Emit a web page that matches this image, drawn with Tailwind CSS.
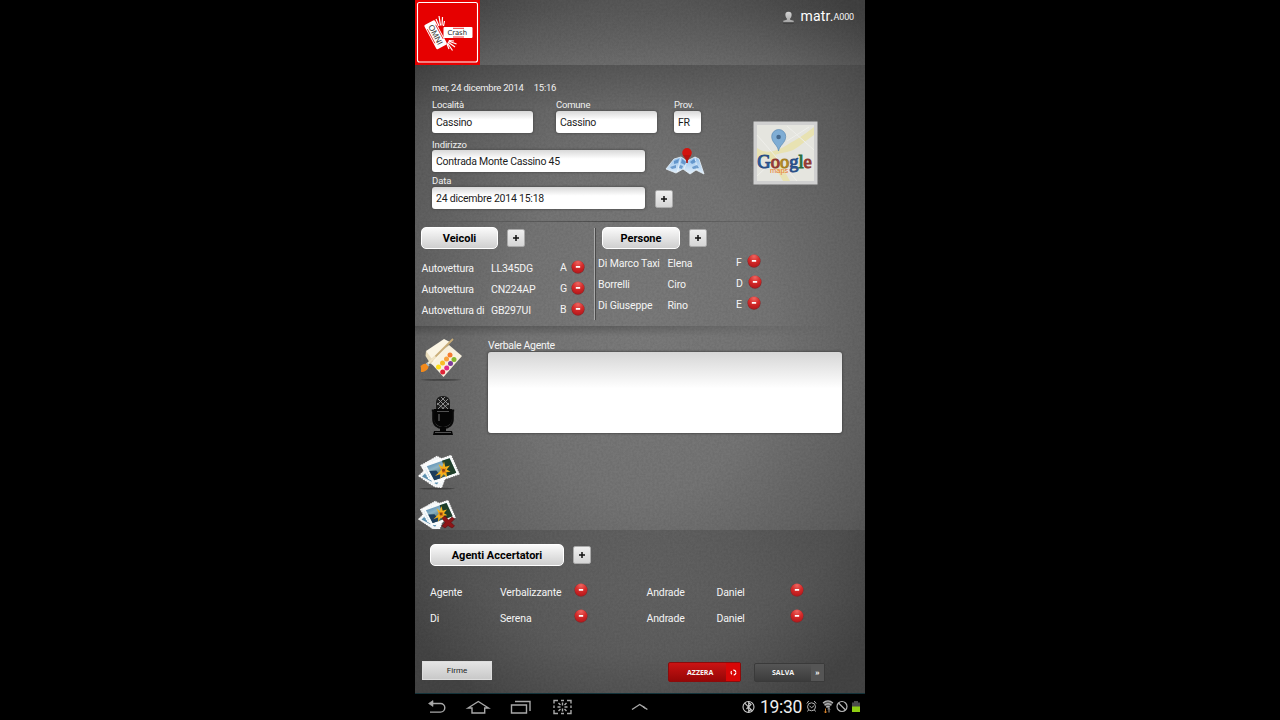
<!DOCTYPE html>
<html lang="it">
<head>
<meta charset="utf-8">
<title>Omni Crash</title>
<script src="https://cdn.jsdelivr.net/npm/@tailwindcss/browser@4"></script>
</head>
<body class="bg-black w-[1280px] h-[720px] overflow-hidden flex justify-center font-[Roboto,sans-serif]">
<svg width="0" height="0" class="absolute">
  <defs>
    <radialGradient id="rg" cx=".5" cy=".15" r=".9"><stop offset="0" stop-color="#ee6560"/><stop offset=".5" stop-color="#d42a29"/><stop offset="1" stop-color="#b0161a"/></radialGradient>
    <linearGradient id="sky" x2=".6" y2="1"><stop offset="0" stop-color="#2f6faa"/><stop offset=".45" stop-color="#8cb3c4"/><stop offset="1" stop-color="#24402c"/></linearGradient>
    <linearGradient id="mapg" x2="0" y2="1"><stop offset="0" stop-color="#8fbdea"/><stop offset="1" stop-color="#e3f0fb"/></linearGradient>
    <linearGradient id="usr" x2="0" y2="1"><stop offset="0" stop-color="#d4d4d4"/><stop offset="1" stop-color="#a4a4a4"/></linearGradient>
    <symbol id="minus" viewBox="0 0 14 14"><circle cx="7" cy="7.200" r="6.500" fill="#84282a"/><circle cx="7" cy="6.800" r="6.200" fill="url(#rg)"/><rect x="4.800" y="5.900" width="4.400" height="1.900" rx=".4" fill="#fff"/></symbol>
    <symbol id="photos" viewBox="0 0 43 36">
      <path d="M2 22l9-9 17 11-3.500 9.500-7-1z" fill="#f1f5f7" stroke="#fff" stroke-width="1.200" stroke-dasharray="1.800 .6"/><path d="M5 22.500l6-6 12 9-3 5z" fill="#5a8fae"/>
      <path d="M4 11.500L20 2.500l15 8L24 29 12 25z" fill="#f3f6f7" stroke="#fff" stroke-width="1.200" stroke-dasharray="1.800 .6"/><path d="M7.500 12.500l9-5v14l-4 2z" fill="#7aaccb"/>
      <path d="M7 11L34 1.500l8 18.500L16 29z" fill="#f8fafa" stroke="#fff" stroke-width="1.200" stroke-dasharray="1.800 .6"/><path d="M9.800 12.200L32.600 4.200l6.600 14.500L17.300 26.300z" fill="url(#sky)"/><path d="M25 6.800l7.600-2.600 6.600 14.500-9 3.200z" fill="#1f3f2a"/><path d="M12.300 17l7-.5 5.500 7.200-7.500 2.600z" fill="#1d3d5c"/>
      <path d="M24 16l-2.500-6 3.800 3L27 7.500l1.300 5.300 4.700-1.300-3.300 4 3.800 2.300-4.300.5 1 5-3.700-3-3.300 4.500.2-4.800-5.400 2 3.800-3.500z" fill="#f4b11c"/><path d="M25 17l-1-3 3 1 2-1-.5 3 1 2-2-.5-2 1z" fill="#e47c14"/><circle cx="26.500" cy="16.300" r="1.500" fill="#8b4513"/>
    </symbol>
  </defs>
</svg>

<main class="relative w-[450px] h-[720px] flex flex-col text-[#f4f4f4] text-[11px] whitespace-nowrap bg-[radial-gradient(ellipse_330px_420px_at_50%_46%,#7a7a7a_0%,#747474_40%,#5c5c5c_78%,#444_100%)]">
  <svg class="absolute left-0 top-0 w-[450px] h-[694px] opacity-8"><filter id="n"><feTurbulence type="fractalNoise" baseFrequency=".45" numOctaves="2" seed="4"/><feColorMatrix values="0 0 0 0 0  0 0 0 0 0  0 0 0 0 0  1.6 0 0 0 -.5"/></filter><rect width="450" height="694" filter="url(#n)"/></svg>

  <header class="relative h-[65px] flex justify-between bg-linear-to-b from-black/5 to-white/5">
    <svg class="w-[65px] h-[65px]" viewBox="0 0 65 65">
      <rect width="65" height="65" fill="#e60000"/><rect x="2.500" y="2.500" width="60" height="59.500" rx="2" fill="none" stroke="#fff" stroke-width="1.100"/>
      <g transform="rotate(62 20.500 34.500)"><rect x="7" y="28.500" width="27.500" height="12" rx="1.500" fill="#fff"/><path d="M12 29.800h16M12 39.200h16" stroke="#e60000" stroke-width=".7"/><text x="20.700" y="37.300" font-size="8.200" text-anchor="middle" fill="#333" font-family="Liberation Sans">OMNI</text></g>
      <rect x="28.500" y="27" width="29" height="11" rx="1" fill="#fff"/><path d="M38 28.300h11M38 37h11" stroke="#e60000" stroke-width=".8"/>
      <text x="42.200" y="35.200" font-size="6.800" text-anchor="middle" fill="#222" font-family="DejaVu Sans">Crash</text>
      <path d="M24 26l-3-7M25.500 25.500L24 16M27 25.500l.5-8.500M28.500 26l1-5M33.500 41l8 3M33 42l7 5M32.500 43l5 7.500M32 44l2 5M34 40.500l5 .5" stroke="#fff" stroke-width="1.200" fill="none"/>
    </svg>
    <div class="flex items-start pr-[11px] pt-[8px]">
      <svg class="w-[13px] h-[13px] mt-[3px] mr-[5px]" viewBox="0 0 12 13"><path d="M6 .8C3.500.8 2.700 2.300 2.900 4.300c.1 1.500.8 2.600 1.500 3.200v1.300L.8 9.800v1.700h10.400V9.800L7.600 8.800V7.500c.7-.6 1.400-1.700 1.500-3.200C9.300 2.300 8.500.8 6 .8z" fill="url(#usr)"/><path d="M.6 12h10.800" stroke="#333"/></svg>
      <span class="text-[14px] leading-[16px] tracking-[.2px] text-white">matr.</span><span class="text-[9px] leading-[19px] tracking-[-.15px]">A000</span>
    </div>
  </header>

  <section class="relative h-[157px] flex pl-[17px] pt-[16px]">
    <div class="absolute inset-x-0 top-0 h-[45px] bg-linear-to-b from-black/14 to-transparent mask-r-from-60%"></div>
    <div class="relative w-[321px] flex flex-col">
      <div class="h-[14px] flex gap-[10px] text-[9.500px] leading-[14px] tracking-[-.23px] text-[#f0f0f0]"><span>mer, 24 dicembre 2014</span><span>15:16</span></div>
      <div class="flex mt-[3px] text-[9.500px] leading-[13px] tracking-[-.2px] text-[#f0f0f0]"><span class="w-[124px]">Località</span><span class="w-[118px]">Comune</span><span>Prov.</span></div>
      <div class="flex text-[10.500px] leading-[23px] tracking-[-.23px] text-[#1c1c1c]">
        <div class="w-[101px] h-[22px] mr-[23px] pl-[4px] rounded-[3px] bg-linear-to-b from-[#d8d8d8] via-white via-40% to-white shadow-[0_0_2px_1px_#4449]">Cassino</div>
        <div class="w-[101px] h-[22px] mr-[17px] pl-[4px] rounded-[3px] bg-linear-to-b from-[#d8d8d8] via-white via-40% to-white shadow-[0_0_2px_1px_#4449]">Cassino</div>
        <div class="w-[27px] h-[22px] pl-[4px] rounded-[3px] bg-linear-to-b from-[#d8d8d8] via-white via-40% to-white shadow-[0_0_2px_1px_#4449]">FR</div>
      </div>
      <div class="h-[13px] mt-[5px] text-[9.500px] leading-[13px] tracking-[-.1px] text-[#f0f0f0]">Indirizzo</div>
      <div class="flex h-[22px] text-[10.500px] tracking-[-.25px] text-[#1c1c1c]">
        <div class="w-[213px] h-[22px] mr-[20px] -mt-px pl-[4px] rounded-[3px] bg-linear-to-b from-[#d8d8d8] via-white via-40% to-white shadow-[0_0_2px_1px_#4449] leading-[24px]">Contrada Monte Cassino 45</div>
        <svg class="w-[41px] h-[29px] -mt-[4px]" viewBox="0 0 41 29">
          <path d="M9 12l7-2 6 4 8-4 4 2 5 15-8-4-6 4-7-5-7 4-10-4z" fill="url(#mapg)" stroke="#e8f2fa" stroke-width=".8"/>
          <path d="M15.500 11l-3 14M22 14l-3 8M30 10l2 13" stroke="#fff" stroke-width=".6"/><path d="M9 14l5-2-1 4-4 1zM5 20l6-2 0 3-4 1zM17 12l4 3-1 3-4-2zM25 15l4-3 2 3-4 2zM27 20l5-2 2 3-6 1zM15 18l3 1-1 3-3-1z" fill="#3f79b8" opacity=".65"/>
          <path d="M22 16V7" stroke="#a01512" stroke-width="1.600"/><circle cx="22" cy="5.800" r="4.800" fill="#d2140e"/><path d="M18 8l4 7 4-7z" fill="#b9130e"/>
        </svg>
      </div>
      <div class="h-[13px] mt-[1px] text-[9.500px] leading-[13px] tracking-[-.1px] text-[#f0f0f0]">Data</div>
      <div class="flex h-[22px] text-[10.500px] leading-[23px] tracking-[-.23px] text-[#1c1c1c]">
        <div class="w-[213px] h-[22px] mr-[10px] pl-[4px] rounded-[3px] bg-linear-to-b from-[#d8d8d8] via-white via-40% to-white shadow-[0_0_2px_1px_#4449]">24 dicembre 2014 15:18</div>
        <div class="w-[18px] h-[18px] mt-[3px] rounded-[2px] border border-[#aaa] bg-linear-to-b from-[#efefef] to-[#d5d5d5] grid place-items-center text-black"><svg class="w-[6px] h-[6px]" viewBox="0 0 6 6"><path d="M3 0v6M0 3h6" stroke="#111" stroke-width="1.500"/></svg></div>
      </div>
    </div>
    <svg class="relative w-[65px] h-[64px] mt-[40px]" viewBox="0 0 65 64">
      <rect x=".5" y=".5" width="64" height="63" fill="#d0d0d0"/><rect x="4" y="4" width="57" height="56" fill="#e5e5df"/>
      <path d="M4 27c10 7 20 3 30-3S50 15 61 6v8C49 22 44 29 34 31S14 36 4 38z" fill="#e8e2b2"/><path d="M22 33l15 27h-7L14 33z" fill="#e8e2b2"/><path d="M34 5l27 24M4 14l40 46M4 55L22 38M34 20L56 6" stroke="#efefeb" stroke-width="1"/>
      <path d="M25.500 30c-.5-6-6.800-8-6.800-14.500a7 7 0 0114 0C32.700 22 26.500 24 25.500 30z" fill="#7fadd4" stroke="#5b89b3" stroke-width=".7"/><circle cx="25.600" cy="16" r="2.300" fill="#45688c"/>
      <text x="17" y="51.500" font-family="Liberation Sans" font-size="7.500" fill="#e87a2c">maps</text>
      <text x="4.300" y="46.500" font-family="Liberation Serif" font-size="18.500" stroke-width="1"><tspan fill="#2f5fa8" stroke="#2a4f86">G</tspan><tspan fill="#a83a35" stroke="#8f3a33">o</tspan><tspan fill="#c79a2c" stroke="#a58023">o</tspan><tspan fill="#2f5fa8" stroke="#2a4f86">g</tspan><tspan fill="#2f8549" stroke="#2b6b3d">l</tspan><tspan fill="#a83a35" stroke="#8f3a33">e</tspan></text>
    </svg>
    <div class="absolute left-0 bottom-0 w-[400px] h-px bg-linear-to-r from-transparent via-black/35 to-transparent"></div>
  </section>

  <section class="relative h-[104px] flex">
    <div class="w-[179px] pt-[5px] pl-[6px]">
      <div class="flex items-center gap-[9px]">
        <div class="w-[77px] h-[22px] rounded-[5px] border border-white bg-linear-to-b from-[#fafafa] to-[#cfcfcf] text-black text-[11px] font-bold leading-[21px] text-center">Veicoli</div>
        <div class="w-[18px] h-[18px] rounded-[2px] border border-[#aaa] bg-linear-to-b from-[#efefef] to-[#d5d5d5] grid place-items-center"><svg class="w-[6px] h-[6px]" viewBox="0 0 6 6"><path d="M3 0v6M0 3h6" stroke="#111" stroke-width="1.500"/></svg></div>
      </div>
      <div class="grid grid-cols-[69.500px_69px_11px_14px] auto-rows-[21px] mt-[9px] pl-[.5px] text-[10.500px] leading-[22px] tracking-[-.16px]">
        <span>Autovettura</span><span>LL345DG</span><span class="-mt-px">A</span><svg class="w-[14px] h-[14px] mt-[2px]"><use href="#minus"/></svg>
        <span>Autovettura</span><span>CN224AP</span><span class="-mt-px">G</span><svg class="w-[14px] h-[14px] mt-[2px]"><use href="#minus"/></svg>
        <span>Autovettura di</span><span>GB297UI</span><span class="-mt-px">B</span><svg class="w-[14px] h-[14px] mt-[2px]"><use href="#minus"/></svg>
      </div>
    </div>
    <div class="w-[2px] h-[92px] mt-[6px] border-l border-[#aaa] bg-[#4a4a4a]"></div>
    <div class="pt-[5px] pl-[2px]">
      <div class="flex items-center gap-[9px] pl-[4px]">
        <div class="w-[78px] h-[22px] rounded-[5px] border border-white bg-linear-to-b from-[#fafafa] to-[#cfcfcf] text-black text-[11px] font-bold leading-[21px] text-center">Persone</div>
        <div class="w-[18px] h-[18px] rounded-[2px] border border-[#aaa] bg-linear-to-b from-[#efefef] to-[#d5d5d5] grid place-items-center"><svg class="w-[6px] h-[6px]" viewBox="0 0 6 6"><path d="M3 0v6M0 3h6" stroke="#111" stroke-width="1.500"/></svg></div>
      </div>
      <div class="grid grid-cols-[69.500px_68.500px_11px_15px] auto-rows-[21px] mt-[4px] text-[10.500px] leading-[21px] tracking-[-.13px]">
        <span>Di Marco Taxi</span><span>Elena</span><span class="-mt-px">F</span><svg class="w-[14px] h-[14px] mt-px"><use href="#minus"/></svg>
        <span>Borrelli</span><span>Ciro</span><span class="-mt-px">D</span><svg class="w-[14px] h-[14px] mt-px ml-px"><use href="#minus"/></svg>
        <span>Di Giuseppe</span><span>Rino</span><span class="-mt-px">E</span><svg class="w-[14px] h-[14px] mt-px"><use href="#minus"/></svg>
      </div>
    </div>
  </section>

  <section class="relative h-[204px] flex">
    <div class="absolute left-0 top-0 w-[420px] h-[10px] bg-linear-to-b from-black/20 to-transparent mask-r-from-50%"></div>
    <div class="w-[73px] flex flex-col pl-[2px] pt-[11px]">
      <svg class="w-[48px] h-[45px]" viewBox="0 0 48 45">
        <ellipse cx="24" cy="42.800" rx="20" ry=".9" fill="#222" opacity=".5"/>
        <path d="M12 24l20-16 13 11-18.500 21z" fill="#f8f1de"/><path d="M9 14L27 2l6 3-18 23z" fill="#fbf5e4"/><path d="M9 14l-.5 5 5 8 3-3z" fill="#e9dcbb"/>
        <path d="M12 26L36 2" stroke="#c9ad78" stroke-width="1.800"/><path d="M9.500 28l9-8.500" stroke="#f1e5c6" stroke-width="2.400"/><path d="M9.500 27c-3-1-4 1-6 2 .8 2.500.5 4.500.5 6 3.500 0 7.500-2 7.500-5.500z" fill="#f28a1c"/><path d="M9.500 26l2.500 3" stroke="#9fb3c0" stroke-width="1.600"/>
        <g><circle cx="33" cy="18" r="2.500" fill="#f47a2d"/><circle cx="37" cy="22.500" r="2.500" fill="#86b92c"/><circle cx="29.500" cy="22" r="2.500" fill="#f9a13c"/><circle cx="33.500" cy="26.500" r="2.500" fill="#7d3d99"/><circle cx="25.500" cy="26" r="2.500" fill="#f8bd28"/><circle cx="29.700" cy="31" r="2.500" fill="#df2c8a"/><circle cx="21.500" cy="30" r="2.500" fill="#ffe01b"/><circle cx="25.700" cy="35" r="2.500" fill="#df2437"/></g>
      </svg>
      <svg class="w-[24px] h-[41px] ml-[14px] mt-[13px]" viewBox="0 0 24 41">
        <rect x="5" y="1" width="14" height="19" rx="6" fill="#1c1c1c"/><path d="M7 4l10 10M6 8l8 7M10 2l8 8M17 4L7 14M18 8l-8 7M14 2L6 10" stroke="#999" stroke-width=".9"/>
        <path d="M3 14h18v10c0 4-4 8-9 8s-9-4-9-8z" fill="#050505"/><path d="M2.300 15v9c0 6 4 9 9.700 9s9.700-3 9.700-9v-9M.8 15.500h3M20.200 15.500h3" stroke="#090909" stroke-width="2.200" fill="none"/><path d="M6 16.500h12" stroke="#666" stroke-width=".8"/><path d="M8 19v7" stroke="#777"/><path d="M9 32h6v4h6l1 4H2l1-4h6z" fill="#050505"/><path d="M4 37.500h16" stroke="#888" stroke-width=".6"/>
      </svg>
      <svg class="w-[43px] h-[36px] mt-[18px]" viewBox="0 0 43 36"><ellipse cx="20" cy="34.600" rx="18" ry=".9" fill="#222" opacity=".5"/><use href="#photos" width="43" height="36"/></svg>
      <svg class="w-[43px] h-[31px] mt-[8px]" viewBox="0 0 43 31"><use href="#photos" y="1" width="39" height="33"/><path d="M25 20l3-2 3.500 4 3.500-3 2.500 2-3.500 3.500 3.500 3.500-2.500 2-4-2.500-3 2.500-3-2 3-3.500z" fill="#8e1517" stroke="#5d0c0e" stroke-width=".6"/></svg>
    </div>
    <div class="pt-[12px]">
      <div class="h-[14px] text-[10.500px] leading-[15px] tracking-[-.3px]">Verbale Agente</div>
      <div class="w-[354px] h-[81px] rounded-[3px] bg-linear-to-b from-[#d6d6d6] via-white via-45% to-white shadow-[0_0_2px_1px_#444b]"></div>
    </div>
  </section>

  <section class="relative h-[122px] pl-[15px] pt-[14px] bg-linear-to-b from-black/14 via-black/5 to-transparent">
    <div class="flex items-center gap-[9px]">
      <div class="w-[134px] h-[22px] rounded-[5px] border border-white bg-linear-to-b from-[#fafafa] to-[#cfcfcf] text-black text-[11px] font-bold leading-[22px] text-center">Agenti Accertatori</div>
      <div class="w-[18px] h-[18px] rounded-[2px] border border-[#aaa] bg-linear-to-b from-[#efefef] to-[#d5d5d5] grid place-items-center"><svg class="w-[6px] h-[6px]" viewBox="0 0 6 6"><path d="M3 0v6M0 3h6" stroke="#111" stroke-width="1.500"/></svg></div>
    </div>
    <div class="grid grid-cols-[70px_73.500px_73px_70px_73px_14px] auto-rows-[26px] mt-[13px] text-[10.500px] leading-[27px] tracking-[-.14px]">
      <span>Agente</span><span>Verbalizzante</span><svg class="w-[14px] h-[14px] mt-[4px]"><use href="#minus"/></svg><span>Andrade</span><span>Daniel</span><svg class="w-[14px] h-[14px] mt-[4px]"><use href="#minus"/></svg>
      <span>Di</span><span>Serena</span><svg class="w-[14px] h-[14px] mt-[4px]"><use href="#minus"/></svg><span>Andrade</span><span>Daniel</span><svg class="w-[14px] h-[14px] mt-[4px]"><use href="#minus"/></svg>
    </div>
  </section>

  <section class="relative h-[42px] flex items-start pl-[7px] pt-[9px] border-b border-[#14333a]">
    <div class="w-[70px] h-[19px] bg-linear-to-b from-[#e4e4e4] to-[#c9c9c9] border border-[#ddd] text-[#222] text-[8px] leading-[18px] text-center">Firme</div>
    <div class="flex ml-[176px] mt-px w-[73px] h-[20px] rounded-[2px] border border-[#8c0b0b] bg-linear-to-b from-[#cb1313] to-[#960707] text-[7px] font-bold font-[Open_Sans,sans-serif] leading-[19px]">
      <span class="w-[57px] pl-[18px]">AZZERA</span><span class="flex-1 bg-[#d80606] grid place-items-center"><svg class="w-[7px] h-[7px]" viewBox="0 0 7 7"><circle cx="3.500" cy="3.500" r="2.400" fill="none" stroke="#fff" stroke-width="1.100" stroke-dasharray="3.200 1.800"/></svg></span>
    </div>
    <div class="flex ml-[13px] mt-[2px] w-[71px] h-[19px] rounded-[2px] border border-[#3a3a3a] bg-linear-to-b from-[#555] to-[#3c3c3c] text-[7px] font-bold font-[Open_Sans,sans-serif] leading-[17px]">
      <span class="w-[56px] pl-[17px]">SALVA</span><span class="flex-1 bg-[#555] text-center">»</span>
    </div>
  </section>

  <nav class="relative h-[26px] bg-black flex items-center">
    <svg class="w-[230px] h-[26px]" viewBox="0 0 230 26" fill="none" stroke="#a8a8a8" stroke-width="1.400">
      <path d="M15 9.500h10.500a4.200 4.200 0 010 8.600H15"/><path d="M18 6.500l-4.500 3 4.500 3z" fill="#a8a8a8" stroke-width=".6"/>
      <path d="M53 14l10.300-6.500L73.500 14h-3.800v5H57v-5z"/>
      <path d="M96.500 11h15v8h-15zM100 7.500h15V17"/>
      <path d="M139 9.500V6.500h4M152 6.500h4v3M156 16v3.500h-4M143 19.500h-4V16M139 11.500v2.500M156 11.500v2.500M146 6.500h3M146 19.500h3M147.500 8.500v3M147.500 14.500v3M142.500 13h3M149.500 13h3M143.500 9l2 2M151.500 9l-2 2M143.500 17l2-2M151.500 17l-2-2"/>
      <path d="M217 15.500l7.700-5 7.700 5"/>
    </svg>
    <svg class="w-[112px] h-[26px] ml-[-2px]" viewBox="0 0 112 26" fill="none" stroke="#a8a8a8" stroke-width="1.400"><path d="M-11 15.500l7.700-5 7.700 5"/>
      <g stroke="#ccc" stroke-width="1.100"><circle cx="105.500" cy="13" r="5.500"/><path d="M101.700 9.200l7.500 7.500M103.500 15l4.500-4.500-2.300-2v9l2.300-2"/></g></svg>
    <span class="w-[46px] ml-[5px] text-[17.500px] leading-[27px] tracking-[-.3px] text-[#eee]">19:30</span>
    <svg class="w-[57px] h-[26px]" viewBox="0 0 57 26" fill="none" stroke="#b5b5b5">
      <circle cx="5.500" cy="12.800" r="4"/><path d="M3.500 11.800l2 2 2.500-2M.8 9.500l2-2.500M10.200 9.500l-2-2.500M2.500 16l-1 1.500M8.500 16l1 1.500"/>
      <path d="M17 9c3-2.500 7-2.500 10 0l-5 6z" fill="#555" stroke="none"/><path d="M17 9c3-2.500 7-2.500 10 0M18.500 11.200c2-1.700 5-1.700 7 0M20.200 13.200c1-.8 2.500-.8 3.500 0" stroke-width="1.300"/><path d="M19.500 14.500v4.500M18.300 17.500l1.200 1.500 1.200-1.500" stroke="#e2892d" stroke-width=".9"/><path d="M23 18.500v-4M22 15.500l1-1.200 1 1.200" stroke-width=".9"/>
      <circle cx="36" cy="12.500" r="5" stroke-width="1.200"/><path d="M32.500 9l7 7" stroke-width="1.200"/>
      <path d="M48 7h4v1.500h2V13h-8V8.500h2z" fill="#4b4b4b" stroke="none"/><path d="M46 12.500h8V18h-8z" fill="#8fce12" stroke="none"/>
    </svg>
  </nav>
</main>
</body>
</html>
